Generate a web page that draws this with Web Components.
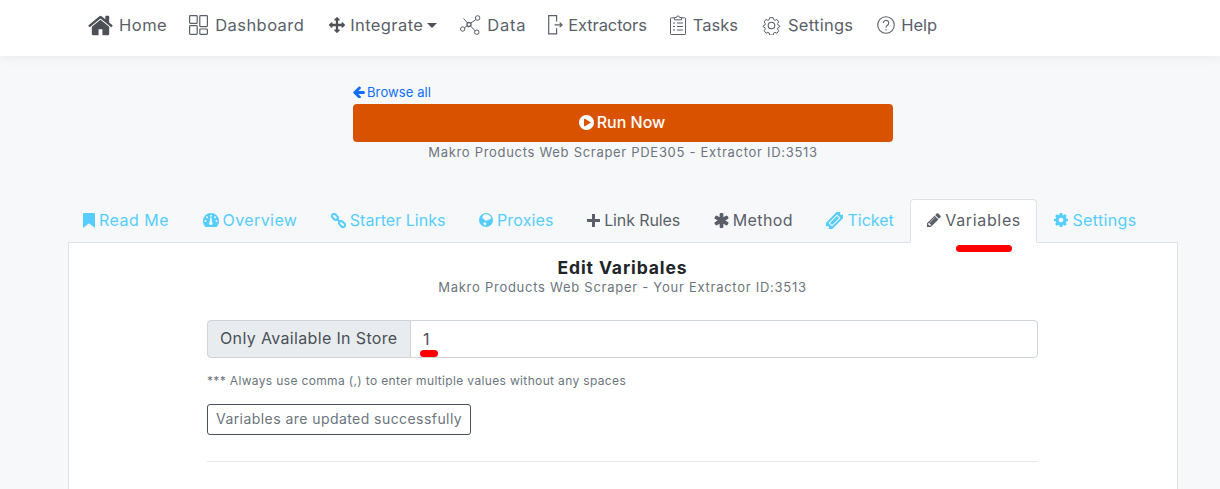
<!DOCTYPE html>
<html lang="en">
<head>
<meta charset="utf-8">
<title>Edit Variables</title>
<style>
    html, body { margin: 0; height: 489px; overflow: hidden; }
    body { background: #f7f8fa; font-family: Inter, "Noto Sans", sans-serif; color: #5a5f69; }
</style>
</head>
<body>
<app-nav>
    <nav-item label="Home" gap="5" track="0.5" after="22"><svg width="27" height="27" viewBox="0 0 1792 1792" fill="#4d5157"><path d="M1472 992v480q0 26-19 45t-45 19h-384v-384H768v384H384q-26 0-45-19t-19-45V992q0-1 .5-3t.5-3l575-474 575 474q1 2 1 6zm223-69l-62 74q-8 9-21 11h-3q-13 0-21-7L896 424l-692 577q-12 8-24 7-13-2-21-11l-62-74q-8-10-7-23.5t11-21.5l719-599q32-26 76-26t76 26l244 204V288q0-14 9-23t23-9h192q14 0 23 9t9 23v408l219 182q10 8 11 21.5t-7 23.5z"/></svg></nav-item>
    <nav-item label="Dashboard" gap="7" track="0.43" after="25"><svg width="19" height="20" viewBox="0 0 19 20" fill="none" stroke="#5a5f69" stroke-width="1.2"><rect x=".6" y=".6" width="7.6" height="7.8" rx=".8"/><rect x=".6" y="10.6" width="7.6" height="8.8" rx=".8"/><rect x="10.8" y=".6" width="7.6" height="11" rx=".8"/><rect x="10.8" y="14" width="7.6" height="5.4" rx=".8"/></svg></nav-item>
    <nav-item label="Integrate" gap="5" track="0.4" after="23" caret><svg width="16" height="16" viewBox="0 0 1792 1792" fill="#4d5157"><path d="M1792 896q0 26-19 45l-256 256q-19 19-45 19t-45-19-19-45v-128h-384v384h128q26 0 45 19t19 45-19 45l-256 256q-19 19-45 19t-45-19l-256-256q-19-19-19-45t19-45 45-19h128v-384H384v128q0 26-19 45t-45 19-45-19L19 941Q0 922 0 896t19-45l256-256q19-19 45-19t45 19 19 45v128h384V384H640q-26 0-45-19t-19-45 19-45L851 19q19-19 45-19t45 19l256 256q19 19 19 45t-19 45-45 19h-128v384h384V640q0-26 19-45t45-19 45 19l256 256q19 19 19 45z"/></svg></nav-item>
    <nav-item label="Data" gap="6" track="0.75" after="22"><svg width="21" height="20" viewBox="0 0 21 20" fill="none" stroke="#5a5f69" stroke-width="1"><circle cx="17.6" cy="3" r="2.3"/><circle cx="2.7" cy="14" r="2.2"/><circle cx="16.8" cy="17.2" r="2.2"/><circle cx="9" cy="9.5" r="2" stroke-width="1.3"/><path d="M15.8 4.6 10.6 8.3M4.6 12.7l2.8-2M10.4 11l4.9 4.8M3.5 3.5l4.2 4.5"/></svg></nav-item>
    <nav-item label="Extractors" gap="5" track="-0.1" after="23"><svg width="15" height="20" viewBox="0 0 15 20" fill="none" stroke="#5a5f69" stroke-width="1.2"><path d="M8.6 6.5V.7H.7v18.1h7.9v-5.6"/><path d="M6.5 9.9h7.5M11.7 7.8l2.4 2.1-2.4 2.1"/></svg></nav-item>
    <nav-item label="Tasks" gap="7" track="0" after="24"><svg width="16" height="20" viewBox="0 0 16 20" fill="none" stroke="#5a5f69" stroke-width="1"><path d="M4.5 2.8H1.2a.7.7 0 0 0-.7.7v15.3c0 .4.3.7.7.7h13.6c.4 0 .7-.3.7-.7V3.5a.7.7 0 0 0-.7-.7h-3.3"/><path d="M4.5 4.8V2.5h2a1.5 1.5 0 0 1 3 0h2v2.3z"/><path d="M3 8h2M7 8h6M3 11.5h2M7 11.5h6M3 15h2M7 15h6"/></svg></nav-item>
    <nav-item label="Settings" gap="7" track="0.25" after="24"><svg width="19" height="19" viewBox="0 0 19 19" fill="none" stroke="#5a5f69" stroke-width="1.1"><circle cx="9.5" cy="9.5" r="3.3"/><path d="M7.6.8h3.8l.6 2.3 1.5.7 2.1-1 2 2.8-1.3 1.9.4 1.5 2 1-.1 1-2 1-.3 1.5 1.3 1.9-2 2.8-2.1-1-1.5.7-.6 2.3H7.6l-.6-2.3-1.5-.7-2.1 1-2-2.8 1.3-1.9-.4-1.5-2-1v-1l2-1 .4-1.5-1.3-1.9 2-2.8 2.1 1 1.5-.7z" transform="translate(.9 .9) scale(.9)"/></svg></nav-item>
    <nav-item label="Help" gap="6" track="0" after="0"><svg width="18" height="18" viewBox="0 0 18 18" fill="none" stroke="#5a5f69" stroke-width="1.1"><circle cx="9" cy="9" r="8.3"/><path d="M6.3 7a2.7 2.7 0 1 1 4.2 2.2c-.9.6-1.5 1-1.5 2.2"/><path d="M9 13.2v1.2"/></svg></nav-item>
</app-nav>

<run-header></run-header>

<tab-bar>
    <tab-item label="Read Me" track="0.5" link><svg width="12" height="15" viewBox="0 0 13 15" preserveAspectRatio="none" fill="currentColor"><path d="M1 0h11a1 1 0 0 1 1 1v14l-6.5-4.7L0 15V1a1 1 0 0 1 1-1z"/></svg></tab-item>
    <tab-item label="Overview" track="0.4" link><svg width="16" height="14" viewBox="0 0 16 14"><path fill="currentColor" fill-rule="evenodd" d="M8 0a8 8 0 0 1 8 8c0 2-.6 3.8-1.7 5.3-.3.4-.7.7-1.2.7H2.900c-.5 0-.9-.3-1.200-.7A8.900 8.900 0 0 1 0 8a8 8 0 0 1 8-8zM8 1.700a1 1 0 1 0 0 2 1 1 0 0 0 0-2zM4 3.300a1 1 0 1 0 0 2 1 1 0 0 0 0-2zM12 3.300a1 1 0 1 0 0 2 1 1 0 0 0 0-2zM2.500 7a1 1 0 1 0 0 2 1 1 0 0 0 0-2zM13.500 7a1 1 0 1 0 0 2 1 1 0 0 0 0-2zM7.300 4.500 6.700 9a1.700 1.700 0 1 0 2.400.1l-.6-4.600z"/></svg></tab-item>
    <tab-item label="Starter Links" track="0.02" link><svg width="15" height="15" viewBox="0 0 15 15" fill="none" stroke="currentColor" stroke-width="2"><rect x="-3.3" y="-2.1" width="6.6" height="4.2" rx="2" transform="translate(3.9 3.9) rotate(45)"/><rect x="-3.3" y="-2.1" width="6.6" height="4.2" rx="2" transform="translate(11.1 11.1) rotate(45)"/><path d="M6.2 6.2l2.6 2.6"/></svg></tab-item>
    <tab-item label="Proxies" track="0.15" link><svg width="14" height="14" viewBox="0 0 14 14"><circle cx="7" cy="7" r="7" fill="currentColor"/><path fill="#f7f8fa" d="M5 1.7c1.5-.6 4-.4 5.5.7.7.6 1.600 1.300 1.500 2.300-.1 1.300-1.300 1.700-2.400 2-1 .3-1.500 1-2.400 1C6.100 7.700 5.600 6.800 5 6.200 4.400 5.700 3.300 5.500 3.500 4.300c.1-1.200.6-2.100 1.500-2.600zM5 9.500c.9-.3 2 .2 2.300 1 .2.700-.3 1.900-1 1.900-.9 0-1.800-1.100-1.900-2-.1-.4.2-.8.6-.9z"/></svg></tab-item>
    <tab-item label="Link Rules" track="-0.1"><svg width="13" height="13" viewBox="0 0 13 13" fill="currentColor"><path d="M5 0h3v5h5v3H8v5H5V8H0V5h5z"/></svg></tab-item>
    <tab-item label="Method" track="0.4"><svg width="15" height="15" viewBox="186 128 1420 1536" fill="currentColor"><path d="M1546 1050q46 26 59.5 77.5T1593 1225l-64 110q-26 46-77.5 59.5T1354 1382l-266-153v307q0 52-38 90t-90 38H832q-52 0-90-38t-38-90v-307l-266 153q-46 26-97.5 12.5T263 1335l-64-110q-26-46-12.5-97.5T246 1050l266-154-266-154q-46-26-59.5-77.5T199 567l64-110q26-46 77.5-59.5T438 410l266 153V256q0-52 38-90t90-38h128q52 0 90 38t38 90v307l266-153q46-26 97.5-12.5T1529 457l64 110q26 46 12.5 97.5T1546 742l-266 154z"/></svg></tab-item>
    <tab-item label="Ticket" track="0" link><svg width="17" height="17" viewBox="0 0 17 17"><g transform="rotate(-45 8.5 8.5)"><path fill="currentColor" d="M-1.5 4h20v3a1.500 1.500 0 0 0 0 3v3h-20v-3a1.500 1.500 0 0 0 0-3z"/><rect x="3" y="6.500" width="11" height="4" fill="none" stroke="#f7f8fa" stroke-width="1"/></g></svg></tab-item>
    <tab-item label="Variables" track="0.65" active><svg width="14" height="14" viewBox="128 128 1536 1536" fill="currentColor"><path d="M491 1536l91-91-235-235-91 91v107h128v128h107zm523-928q0-22-22-22-10 0-17 7l-542 542q-7 7-7 17 0 22 22 22 10 0 17-7l542-542q7-7 7-17zm-54-192l416 416-832 832H128v-416zm683 96q0 53-37 90l-166 166-416-416 166-165q36-38 90-38 53 0 91 38l235 234q37 39 37 91z"/></svg></tab-item>
    <tab-item label="Settings" track="0.35" link><svg width="14" height="14" viewBox="128 128 1536 1536" fill="currentColor"><path d="M1152 896q0-106-75-181t-181-75-181 75-75 181 75 181 181 75 181-75 75-181zm512-109v222q0 12-8 23t-20 13l-185 28q-19 54-39 91 35 50 107 138 10 12 10 25t-9 23q-27 37-99 108t-94 71q-12 0-26-9l-138-108q-44 23-91 38-16 136-29 186-7 28-36 28H785q-14 0-24.5-8.5T749 1634l-28-184q-49-16-90-37l-141 107q-10 9-25 9-14 0-25-11-126-114-165-168-7-10-7-23 0-12 8-23 15-21 51-66.5t54-70.5q-27-50-41-99l-183-27q-13-2-21-12.5t-8-23.5V783q0-12 8-23t19-13l186-28q14-46 39-92-40-57-107-138-10-12-10-24 0-10 9-23 26-36 98.5-107.5T465 263q13 0 26 10l138 107q44-23 91-38 16-136 29-186 7-28 36-28h222q14 0 24.5 8.5T1043 158l28 184q49 16 90 37l142-107q9-9 24-9 13 0 25 10 129 119 165 170 7 8 7 22 0 12-8 23-15 21-51 66.5t-54 70.5q26 50 41 98l183 28q13 2 21 12.5t8 23.5z"/></svg></tab-item>
</tab-bar>

<variables-card></variables-card>

<script>
const navTemplate = document.createElement('template')
navTemplate.innerHTML = `
    <style>
        :host {
            display: flex;
            align-items: center;
            box-sizing: border-box;
            height: 56px;
            padding: 0 0 6px 87px;
            background: #fff;
            box-shadow: 0 2px 10px rgba(0, 0, 0, .06);
            position: relative;
        }
    </style>
    <slot></slot>
`

class AppNav extends HTMLElement {
    constructor() {
        super()
        this.attachShadow({mode: 'open'})
        this.shadowRoot.appendChild(navTemplate.content.cloneNode(true))
    }
}
customElements.define('app-nav', AppNav)

const navItemTemplate = document.createElement('template')
navItemTemplate.innerHTML = `
    <style>
        :host {
            display: flex;
            align-items: center;
            font-size: 16.5px;
            color: #5a5f69;
            white-space: nowrap;
        }
        .caret {
            display: none;
            margin-left: 4px;
            border-top: 5px solid #4d5157;
            border-left: 5px solid transparent;
            border-right: 5px solid transparent;
        }
        :host([caret]) .caret { display: block; }
    </style>
    <slot></slot>
    <span class="label"></span>
    <span class="caret"></span>
`

class NavItem extends HTMLElement {
    constructor() {
        super()
        this.attachShadow({mode: 'open'})
        this.shadowRoot.appendChild(navItemTemplate.content.cloneNode(true))
        let label = this.shadowRoot.querySelector('.label')
        label.textContent = this.getAttribute('label')
        label.style.marginLeft = this.getAttribute('gap') + 'px'
        label.style.letterSpacing = this.getAttribute('track') + 'px'
        this.style.marginRight = this.getAttribute('after') + 'px'
    }
}
customElements.define('nav-item', NavItem)

const headerTemplate = document.createElement('template')
headerTemplate.innerHTML = `
    <style>
        :host {
            display: block;
            width: 540px;
            margin: 25px 0 0 353px;
            font-size: 13px;
        }
        a {
            display: flex;
            align-items: center;
            gap: 2px;
            height: 21px;
            margin-bottom: 2px;
            color: #0d6efd;
            letter-spacing: .1px;
            text-decoration: none;
        }
        button {
            display: flex;
            align-items: center;
            justify-content: center;
            gap: 3px;
            box-sizing: border-box;
            width: 100%;
            height: 38px;
            padding: 0 2px 2px 0;
            border: 0;
            border-radius: 4px;
            background: #d95200;
            color: #fff;
            font: 500 16px Inter, "Noto Sans", sans-serif;
        }
        p {
            margin: 0;
            height: 20px;
            line-height: 20px;
            text-align: center;
            color: #6c757d;
            letter-spacing: .7px;
        }
    </style>
    <a href="#"><svg width="12" height="12" viewBox="192 128 1472 1536" fill="#0d6efd"><path d="M1664 896v128q0 53-32.5 90.5T1547 1152H843l293 294q38 36 38 90t-38 90l-75 76q-37 37-90 37-52 0-91-37L229 1051q-37-37-37-90 0-52 37-91l651-650q38-38 91-38 52 0 90 38l75 74q38 38 38 91t-38 91L843 768h704q52 0 84.5 37.5T1664 896z"/></svg>Browse all</a>
    <button><svg width="15" height="15" viewBox="128 128 1536 1536" fill="#fff"><path d="M896 128q209 0 385.5 103T1561 510.5 1664 896t-103 385.5-279.5 279.5T896 1664t-385.5-103T231 1281.5 128 896t103-385.5T510.5 231 896 128zm384 823q32-18 32-55t-32-55L736 521q-31-19-64-1-32 19-32 56v640q0 37 32 56 16 8 32 8 17 0 32-9z"/></svg>Run Now</button>
    <p>Makro Products Web Scraper PDE305 - Extractor ID:3513</p>
`

class RunHeader extends HTMLElement {
    constructor() {
        super()
        this.attachShadow({mode: 'open'})
        this.shadowRoot.appendChild(headerTemplate.content.cloneNode(true))
    }
}
customElements.define('run-header', RunHeader)

const tabBarTemplate = document.createElement('template')
tabBarTemplate.innerHTML = `
    <style>
        :host {
            display: flex;
            margin: 37px 0 0 66px;
            width: 1112px;
            height: 44px;
        }
    </style>
    <slot></slot>
`

class TabBar extends HTMLElement {
    constructor() {
        super()
        this.attachShadow({mode: 'open'})
        this.shadowRoot.appendChild(tabBarTemplate.content.cloneNode(true))
    }
}
customElements.define('tab-bar', TabBar)

const tabItemTemplate = document.createElement('template')
tabItemTemplate.innerHTML = `
    <style>
        :host {
            display: flex;
            align-items: center;
            gap: 4px;
            box-sizing: border-box;
            height: 44px;
            padding: 0 15.5px 2px 16px;
            border: 1px solid transparent;
            border-radius: 4px 4px 0 0;
            font-size: 16px;
            color: #5a5f69;
            white-space: nowrap;
            position: relative;
            z-index: 1;
        }
        :host([link]) { color: #55ceff; }
        :host([active]) {
            background: #fff;
            border-color: #dee2e6 #dee2e6 #fff;
        }
    </style>
    <slot></slot>
    <span class="label"></span>
`

class TabItem extends HTMLElement {
    constructor() {
        super()
        this.attachShadow({mode: 'open'})
        this.shadowRoot.appendChild(tabItemTemplate.content.cloneNode(true))
        let label = this.shadowRoot.querySelector('.label')
        label.textContent = this.getAttribute('label')
        label.style.letterSpacing = this.getAttribute('track') + 'px'
    }
}
customElements.define('tab-item', TabItem)

const cardTemplate = document.createElement('template')
cardTemplate.innerHTML = `
    <style>
        :host {
            display: block;
            box-sizing: border-box;
            position: relative;
            width: 1110px;
            height: 300px;
            margin: -1px 0 0 68px;
            padding: 15px 139px 0 138px;
            background: #fff;
            border: 1px solid #dee2e6;
        }
        h2 {
            margin: 0;
            height: 20px;
            line-height: 20px;
            text-align: center;
            font-size: 17.5px;
            font-weight: 700;
            color: #212529;
            letter-spacing: .9px;
        }
        .sub {
            margin: 0;
            height: 18px;
            line-height: 18px;
            text-align: center;
            font-size: 13px;
            color: #6c757d;
            letter-spacing: .735px;
        }
        .group {
            display: flex;
            height: 38px;
            margin-top: 24px;
            font-size: 16px;
            color: #495057;
        }
        .addon {
            display: flex;
            align-items: center;
            box-sizing: border-box;
            width: 204px;
            padding: 0 0 2px 12px;
            background: #e9ecef;
            border: 1px solid #ced4da;
            border-radius: 4px 0 0 4px;
            letter-spacing: .35px;
            white-space: nowrap;
        }
        .value {
            display: flex;
            align-items: center;
            flex: 1;
            margin-left: -1px;
            padding-left: 12px;
            border: 1px solid #ced4da;
            border-radius: 0 4px 4px 0;
        }
        .note {
            margin: 16px 0 0;
            height: 14px;
            line-height: 14px;
            font-size: 12px;
            letter-spacing: .35px;
            color: #6c757d;
        }
        .status {
            display: inline-flex;
            align-items: center;
            box-sizing: border-box;
            height: 31px;
            margin-top: 16px;
            padding: 0 8px 2px;
            border: 1px solid #495057;
            border-radius: 3px;
            font-size: 14px;
            letter-spacing: .44px;
            color: #6c757d;
        }
        hr {
            margin: 26px 0 0;
            border: 0;
            border-top: 1px solid #e6e8ea;
        }
        .mark {
            position: absolute;
            height: 7px;
            border-radius: 4px;
            background: #f00;
        }
        .mark.tab { left: 887px; top: 2px; width: 56px; }
        .mark.field { left: 351px; top: 107px; width: 18px; }
    </style>
    <h2>Edit Varibales</h2>
    <p class="sub">Makro Products Web Scraper - Your Extractor ID:3513</p>
    <div class="group">
        <span class="addon">Only Available In Store</span>
        <span class="value">1</span>
    </div>
    <p class="note">*** Always use comma (,) to enter multiple values without any spaces</p>
    <div><span class="status">Variables are updated successfully</span></div>
    <hr>
    <span class="mark tab"></span>
    <span class="mark field"></span>
`

class VariablesCard extends HTMLElement {
    constructor() {
        super()
        this.attachShadow({mode: 'open'})
        this.shadowRoot.appendChild(cardTemplate.content.cloneNode(true))
    }
}
customElements.define('variables-card', VariablesCard)
</script>
</body>
</html>
